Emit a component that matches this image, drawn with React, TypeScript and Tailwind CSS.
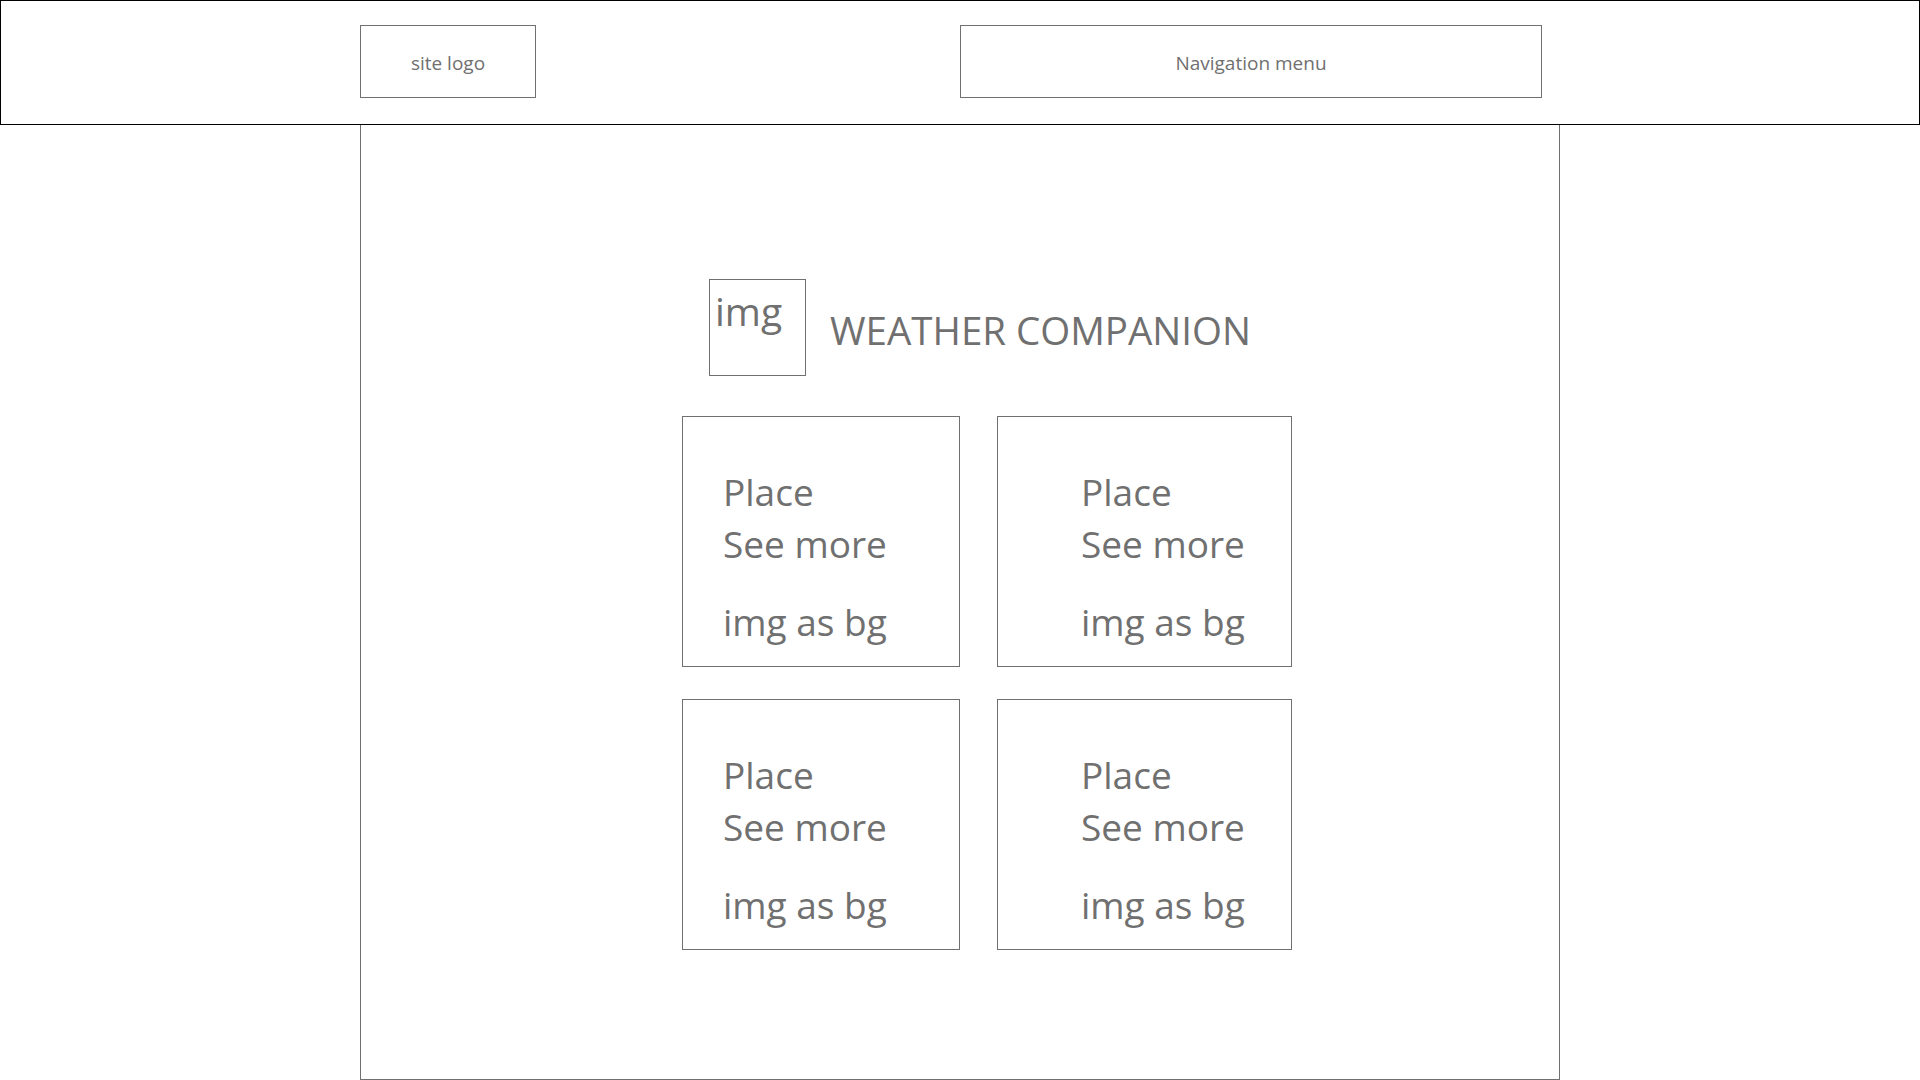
import React from "react";

const font = { fontFamily: '"Open Sans", "Noto Sans", sans-serif' };

function Card({ pad }: { pad: string }) {
  return (
    <div className={`border border-[#707070] h-[251px] pt-[49px] ${pad} text-[37px] text-[#707070]`}>
      <div className="leading-[52px]">Place</div>
      <div className="leading-[52px]">See more</div>
      <div className="leading-[52px] mt-[26px]">img as bg</div>
    </div>
  );
}

export default function App() {
  return (
    <div className="w-[1920px] h-[1080px] bg-white overflow-hidden" style={font}>
      <header className="h-[125px] border border-black flex items-start pt-[24px] pl-[359px]">
        <div className="w-[176px] h-[73px] border border-[#707070] flex items-center justify-center pt-[4px] text-[19px] text-[#707070]">
          site logo
        </div>
        <div className="ml-[424px] w-[582px] h-[73px] border border-[#707070] flex items-center justify-center pt-[4px] text-[19px] text-[#707070]">
          Navigation menu
        </div>
      </header>
      <main className="ml-[360px] w-[1200px] h-[955px] border-x border-b border-[#707070] flex flex-col">
        <div className="ml-[348px] mt-[154px] flex items-center">
          <div className="w-[97px] h-[97px] border border-[#707070] pl-[5px] pt-[2px] text-[39px] text-[#707070] leading-normal">
            img
          </div>
          <div className="ml-[24px] text-[38.5px] text-[#707070] leading-none mt-[6px]">WEATHER COMPANION</div>
        </div>
        <div className="ml-[321px] mt-[40px] grid grid-cols-[278px_295px] gap-x-[37px] gap-y-[32px]">
          <Card pad="pl-[40px]" />
          <Card pad="pl-[83px]" />
          <Card pad="pl-[40px]" />
          <Card pad="pl-[83px]" />
        </div>
      </main>
    </div>
  );
}
